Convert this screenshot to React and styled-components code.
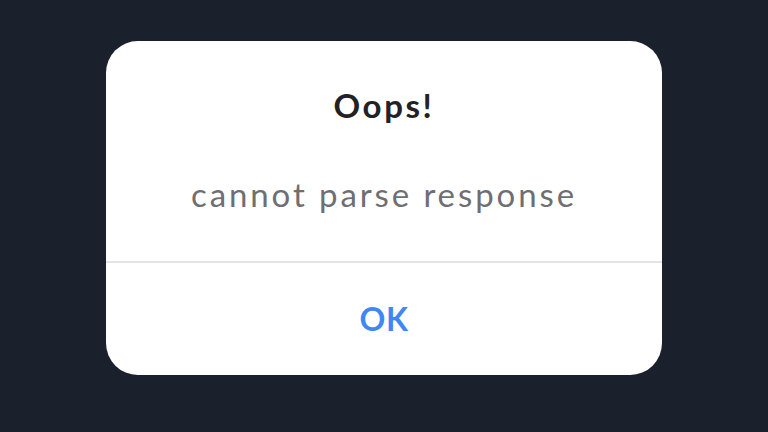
import React from "react";
import styled, { createGlobalStyle } from "styled-components";

const GlobalStyle = createGlobalStyle`
  html, body {
    margin: 0;
    padding: 0;
    background: #1b212c;
  }
  body {
    font-family: Lato, "Open Sans", sans-serif;
  }
`;

const Screen = styled.div`
  width: 768px;
  height: 432px;
  display: flex;
  justify-content: center;
  padding-top: 41px;
  box-sizing: border-box;
  background: #1b212c;
`;

const Dialog = styled.div`
  width: 556px;
  height: 334px;
  background: #ffffff;
  border-radius: 32px;
  display: flex;
  flex-direction: column;
  overflow: hidden;
`;

const Body = styled.div`
  height: 222px;
  display: flex;
  flex-direction: column;
  align-items: center;
  border-bottom: 2px solid #e4e4e6;
  box-sizing: border-box;
`;

const Title = styled.h2`
  margin: 42px 0 0;
  font-size: 33px;
  font-weight: 700;
  letter-spacing: 2.6px;
  color: #222226;
  line-height: 44px;
`;

const Message = styled.p`
  margin: 45px 0 0;
  font-size: 33px;
  font-weight: 400;
  letter-spacing: 2.9px;
  color: #6e6e73;
  line-height: 44px;
`;

const Button = styled.button`
  flex: 1;
  border: none;
  background: transparent;
  font-family: inherit;
  font-size: 32px;
  font-weight: 700;
  letter-spacing: 0.5px;
  color: #3f87f5;
  cursor: pointer;
  padding: 0 0 2px;
`;

export default function App() {
  return (
    <>
      <GlobalStyle />
      <Screen>
        <Dialog>
          <Body>
            <Title>Oops!</Title>
            <Message>cannot parse response</Message>
          </Body>
          <Button>OK</Button>
        </Dialog>
      </Screen>
    </>
  );
}
